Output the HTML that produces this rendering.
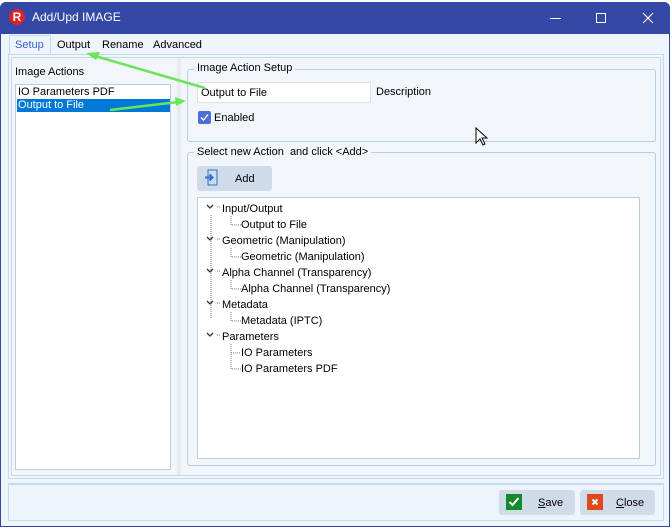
<!DOCTYPE html><html><head><style>
*{box-sizing:border-box}body{margin:0;width:672px;height:529px;background:#fff;font-family:"Liberation Sans",sans-serif;font-size:11px;color:#000;position:relative;overflow:hidden}
.a{position:absolute}
</style></head><body>
<div class="a" style="left:0;top:2;top:2px;width:670px;height:525px;border:1px solid #3248a3;border-radius:6px 6px 0 0;background:#eef4fb"></div>
<div class="a" style="left:0;top:2px;width:670px;height:32px;background:#3349a5;border-radius:6px 6px 0 0"></div>
<div class="a" style="left:9px;top:9px;width:16px;height:16px;border-radius:50%;background:#e31e24;color:#fff;font-weight:bold;font-size:12px;text-align:center;line-height:16px">R</div>
<div class="a" style="left:32px;top:10px;color:#fff;font-size:12px">Add/Upd IMAGE</div>
<div class="a" style="left:550px;top:18px;width:11px;height:1px;background:#fff"></div>
<div class="a" style="left:596px;top:13px;width:10px;height:10px;border:1px solid #fff"></div>
<svg class="a" style="left:642px;top:12px" width="12" height="12"><path d="M1 1L11 11M11 1L1 11" stroke="#fff" stroke-width="1.2"/></svg>
<!-- tabs -->
<div class="a" style="left:9px;top:35px;width:42px;height:20px;border:1px solid #c6d8ec;border-bottom:none;background:#eef4fb"></div>
<div class="a" style="left:15px;top:39px;color:#3e63c8">Setup</div>
<div class="a" style="left:57px;top:39px">Output</div>
<div class="a" style="left:102px;top:39px">Rename</div>
<div class="a" style="left:153px;top:39px">Advanced</div>
<div class="a" style="left:8px;top:54px;width:656px;height:425px;border:1px solid #c6d8ec;background:#f2f6fb"></div>
<div class="a" style="left:11px;top:57px;width:650px;height:419px;border:1px solid #c6d8ec"></div>
<div class="a" style="left:177px;top:58px;width:4px;height:417px;background:#e8ebef"></div>
<div class="a" style="left:15px;top:66px">Image Actions</div>
<div class="a" style="left:15px;top:84px;width:156px;height:386px;border:1px solid #b9cde4;background:#fff"></div>
<div class="a" style="left:18px;top:86px">IO Parameters PDF</div>
<div class="a" style="left:17px;top:99px;width:153px;height:13px;background:#0078d7"></div>
<div class="a" style="left:18px;top:99px;color:#fff">Output to File</div>
<!-- group 1 -->
<div class="a" style="left:187px;top:69px;width:469px;height:73px;border:1px solid #b9cde4;border-radius:3px"></div>
<div class="a" style="left:194px;top:62px;background:#f2f6fb;padding:0 3px">Image Action Setup</div>
<div class="a" style="left:197px;top:82px;width:174px;height:21px;border:1px solid #dbe3ec;background:#fff;padding:4px 3px">Output to File</div>
<div class="a" style="left:376px;top:86px">Description</div>
<div class="a" style="left:198px;top:111px;width:13px;height:13px;background:#4b6fd7;border-radius:2px"></div>
<svg class="a" style="left:198px;top:111px" width="13" height="13"><path d="M3 6.5L5.5 9L10 3.5" stroke="#fff" fill="none" stroke-width="1.3"/></svg>
<div class="a" style="left:214px;top:112px">Enabled</div>
<!-- group 2 -->
<div class="a" style="left:187px;top:152px;width:469px;height:314px;border:1px solid #b9cde4;border-radius:3px"></div>
<div class="a" style="left:194px;top:146px;background:#f2f6fb;padding:0 3px">Select new Action&nbsp; and click &lt;Add&gt;</div>
<div class="a" style="left:197px;top:166px;width:75px;height:25px;background:#d0dbea;border-radius:3px"></div>
<svg class="a" style="left:204px;top:169px" width="14" height="17"><rect x="4" y="1" width="9" height="15" fill="none" stroke="#2e6fd8"/><path d="M1 8.5H8M5.5 5.5L8.5 8.5L5.5 11.5" stroke="#2e6fd8" stroke-width="2" fill="none"/></svg>
<div class="a" style="left:235px;top:173px">Add</div>
<div class="a" style="left:197px;top:197px;width:443px;height:262px;border:1px solid #b9cde4;background:#fff"></div>
<svg class="a" style="left:197px;top:197px" width="200" height="190" stroke="#777" fill="none">
<g stroke-dasharray="1 1"><path d="M14 18V122M34 19V28H44M34 51V60H44M34 83V92H44M34 115V124H44M34 147V172H44M34 156H44M20 10H24M20 42H24M20 74H24M20 106H24M20 138H24"/></g>
<g stroke="#333" stroke-width="1.3"><path d="M10 8L13 11L16 8M10 40L13 43L16 40M10 72L13 75L16 72M10 104L13 107L16 104M10 136L13 139L16 136"/></g>
</svg>
<div class="a" style="left:222px;top:201px;line-height:16px">Input/Output<br>&nbsp;<br>Geometric (Manipulation)<br>&nbsp;<br>Alpha Channel (Transparency)<br>&nbsp;<br>Metadata<br>&nbsp;<br>Parameters</div>
<div class="a" style="left:241px;top:217px;line-height:16px">Output to File<br>&nbsp;<br>Geometric (Manipulation)<br>&nbsp;<br>Alpha Channel (Transparency)<br>&nbsp;<br>Metadata (IPTC)<br>&nbsp;<br>IO Parameters<br>IO Parameters PDF</div>
<!-- bottom -->
<div class="a" style="left:8px;top:483px;width:656px;height:38px;border:1px solid #c6d8ec;border-top:2px solid #c6d8ec"></div>
<div class="a" style="left:499px;top:490px;width:76px;height:25px;background:#d0dbea;border-radius:3px"></div>
<div class="a" style="left:506px;top:494px;width:16px;height:16px;background:#138a2b"></div>
<svg class="a" style="left:506px;top:494px" width="16" height="16"><path d="M3.5 8L6.5 11L12.5 4" stroke="#fff" stroke-width="2" fill="none"/></svg>
<div class="a" style="left:538px;top:497px"><u>S</u>ave</div>
<div class="a" style="left:580px;top:490px;width:75px;height:25px;background:#d0dbea;border-radius:3px"></div>
<div class="a" style="left:587px;top:494px;width:16px;height:16px;background:#e0481a"></div>
<svg class="a" style="left:587px;top:494px" width="16" height="16"><path d="M5.5 5.5L10.5 10.5M10.5 5.5L5.5 10.5" stroke="#fff" stroke-width="2"/></svg>
<div class="a" style="left:616px;top:497px"><u>C</u>lose</div>
<!-- arrows & cursor -->
<svg class="a" style="left:0;top:0" width="672" height="529">
<path d="M95 56L205 88" stroke="#6be35a" stroke-width="2.5"/><path d="M86 53L100 52L96 60Z" fill="#6be35a"/>
<path d="M110 110L178 102" stroke="#6be35a" stroke-width="2.5"/><path d="M186 101L175 97L176 106Z" fill="#6be35a"/>
<path d="M476 128V143L480 139L483 145L485 144L482 138H487Z" fill="#fff" stroke="#000" stroke-width="1"/>
</svg>
</body></html>
